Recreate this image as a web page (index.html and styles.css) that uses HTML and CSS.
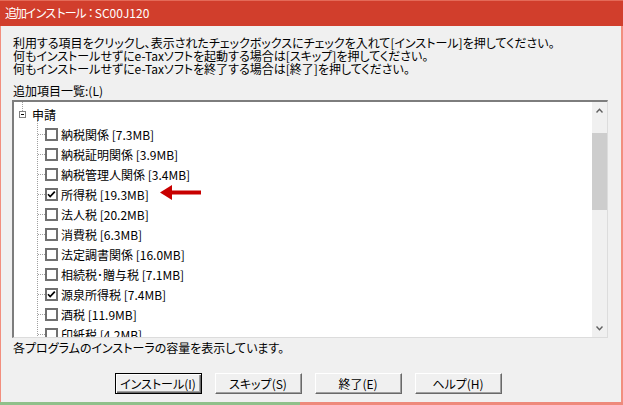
FILE: index.html
```html
<!DOCTYPE html>
<html lang="ja">
<head>
<meta charset="utf-8">
<title>追加インストール：SC00J120</title>
<link rel="stylesheet" href="styles.css">
</head>
<body>
<div class="window">
  <div class="titlebar"><span class="title-jp">追加インストール：</span>SC00J120</div>
  <div class="content">
    <div class="intro">
      <div>利用する項目をクリックし、表示されたチェックボックスにチェックを入れて[インストール]を押してください。</div>
      <div>何もインストールせずにe-Taxソフトを起動する場合は[スキップ]を押してください。</div>
      <div>何もインストールせずにe-Taxソフトを終了する場合は[終了]を押してください。</div>
    </div>
    <div class="label">追加項目一覧:(L)</div>
    <div class="list">
      <div class="tree">
        <div class="row root">
          <svg class="expander" width="18" height="22" viewBox="0 0 18 22">
            <line x1="8.5" y1="0" x2="8.5" y2="9" stroke="#a0a0a0" stroke-dasharray="1 1"/>
            <rect x="5.5" y="9.5" width="6" height="6" fill="#fff" stroke="#808080"/>
            <line x1="7" y1="12.5" x2="10" y2="12.5" stroke="#000"/>
          </svg>
          <span class="text">申請</span>
        </div>
        <div class="children">
          <div class="row item"><span class="conn"></span><span class="cb"></span><span class="text">納税関係 [7.3MB]</span></div>
          <div class="row item"><span class="conn"></span><span class="cb"></span><span class="text">納税証明関係 [3.9MB]</span></div>
          <div class="row item"><span class="conn"></span><span class="cb"></span><span class="text">納税管理人関係 [3.4MB]</span></div>
          <div class="row item"><span class="conn"></span><span class="cb"><svg width="9" height="9" viewBox="0 0 9 9"><path d="M1 4.2 L3.2 6.6 L7.8 1.6" fill="none" stroke="#000" stroke-width="1.7"/></svg></span><span class="text">所得税 [19.3MB]</span></div>
          <div class="row item"><span class="conn"></span><span class="cb"></span><span class="text">法人税 [20.2MB]</span></div>
          <div class="row item"><span class="conn"></span><span class="cb"></span><span class="text">消費税 [6.3MB]</span></div>
          <div class="row item"><span class="conn"></span><span class="cb"></span><span class="text">法定調書関係 [16.0MB]</span></div>
          <div class="row item"><span class="conn"></span><span class="cb"></span><span class="text">相続税･贈与税 [7.1MB]</span></div>
          <div class="row item"><span class="conn"></span><span class="cb"><svg width="9" height="9" viewBox="0 0 9 9"><path d="M1 4.2 L3.2 6.6 L7.8 1.6" fill="none" stroke="#000" stroke-width="1.7"/></svg></span><span class="text">源泉所得税 [7.4MB]</span></div>
          <div class="row item"><span class="conn"></span><span class="cb"></span><span class="text">酒税 [11.9MB]</span></div>
          <div class="row item"><span class="conn"></span><span class="cb"></span><span class="text">印紙税 [4.2MB]</span></div>
        </div>
      </div>
      <div class="scrollbar">
        <div class="sb-btn">
          <svg width="7" height="5" viewBox="0 0 7 5"><path d="M0.5 4.5 L3.5 1.2 L6.5 4.5" fill="none" stroke="#606060" stroke-width="1.4"/></svg>
        </div>
        <div class="sb-track"><div class="sb-thumb"></div></div>
        <div class="sb-btn">
          <svg width="7" height="5" viewBox="0 0 7 5"><path d="M0.5 0.5 L3.5 3.8 L6.5 0.5" fill="none" stroke="#606060" stroke-width="1.4"/></svg>
        </div>
      </div>
      <svg class="arrow" width="41" height="16" viewBox="0 0 41 16">
        <polygon points="0,7.5 12,0 12,15" fill="#c80000"/>
        <rect x="10" y="5.5" width="31" height="4" fill="#c80000"/>
      </svg>
    </div>
    <div class="status">各プログラムのインストーラの容量を表示しています。</div>
    <div class="buttons">
      <button class="btn default">インストール(I)</button>
      <button class="btn">スキップ(S)</button>
      <button class="btn">終了(E)</button>
      <button class="btn">ヘルプ(H)</button>
    </div>
  </div>
  <div class="bottom-line"></div>
</div>
</body>
</html>
```

FILE: styles.css
```css
html, body {
  margin: 0;
  padding: 0;
  background: #f0f0f0;
}

body {
  font-family: "Noto Sans CJK JP", "Liberation Sans", sans-serif;
  font-size: 12px;
  color: #000;
  font-feature-settings: "palt";
}

.window {
  width: 623px;
  height: 405px;
  box-sizing: border-box;
  display: flex;
  flex-direction: column;
  background: #f0f0f0;
  border-left: 1px solid #f28e7e;
  border-right: 2px solid #f28e7e;
}

.titlebar {
  height: 26px;
  box-sizing: border-box;
  border-top: 1px solid #e46a58;
  background: #d13e2c;
  color: #fff;
  line-height: 24px;
  margin: 0 -2px 0 -1px;
  padding-left: 5px;
  white-space: nowrap;
}

.title-jp {
  font-feature-settings: normal;
  letter-spacing: -2px;
}

.content {
  display: flex;
  flex-direction: column;
  padding: 0 12px;
}

.intro {
  margin-top: 10px;
  line-height: 13px;
}

.label {
  margin-top: 9px;
  line-height: 13px;
}

.list {
  position: relative;
  margin-top: 3px;
  margin-left: -1px;
  width: 596px;
  height: 238px;
  box-sizing: border-box;
  display: flex;
  background: #fff;
  border-top: 2px solid #7d7d7d;
  border-left: 2px solid #7d7d7d;
  border-right: 1px solid #dcdcdc;
  border-bottom: 1px solid #dcdcdc;
}

.tree {
  flex: 1;
  overflow: hidden;
  padding-top: 2px;
}

.row {
  height: 20px;
  display: flex;
  align-items: center;
  white-space: nowrap;
}

.root .expander {
  flex: none;
  align-self: flex-start;
  margin-top: -2px;
}

.children {
  margin-left: 23px;
  margin-top: -4px;
  padding-top: 4px;
  border-left: 1px dotted #a0a0a0;
}

.conn {
  width: 7px;
  height: 0;
  border-top: 1px dotted #a0a0a0;
  flex: none;
}

.cb {
  width: 13px;
  height: 13px;
  box-sizing: border-box;
  border: 2px solid #707070;
  background: #fff;
  flex: none;
  display: flex;
}

.cb svg {
  display: block;
}

.item .text {
  margin-left: 3px;
}

.scrollbar {
  width: 15px;
  flex: none;
  display: flex;
  flex-direction: column;
  background: #f0f0f0;
}

.sb-btn {
  height: 17px;
  display: flex;
  align-items: center;
  justify-content: center;
}

.sb-track {
  flex: 1;
  padding-top: 14px;
}

.sb-thumb {
  height: 77px;
  background: #cdcdcd;
}

.arrow {
  position: absolute;
  left: 146px;
  top: 83px;
}

.status {
  margin-top: 3px;
  line-height: 13px;
}

.buttons {
  margin-top: 19px;
  display: flex;
  justify-content: center;
  gap: 13px;
  padding-right: 6px;
}

.btn {
  width: 87px;
  height: 21px;
  box-sizing: border-box;
  padding: 0;
  font: inherit;
  font-feature-settings: "palt";
  color: #000;
  background: #f0f0f0;
  border: 1px solid;
  border-color: #fff #696969 #696969 #fff;
  box-shadow: inset -1px -1px #a0a0a0;
}

.btn.default {
  border: 1px solid #000;
  box-shadow: inset 1px 1px #fff, inset -1px -1px #696969, inset -2px -2px #a0a0a0;
}

.bottom-line {
  margin: auto -2px 0 -1px;
  height: 3px;
  background: linear-gradient(to right, #8fc08a 0, #8fc08a 300px, #ee8a7c 300px);
}
```
